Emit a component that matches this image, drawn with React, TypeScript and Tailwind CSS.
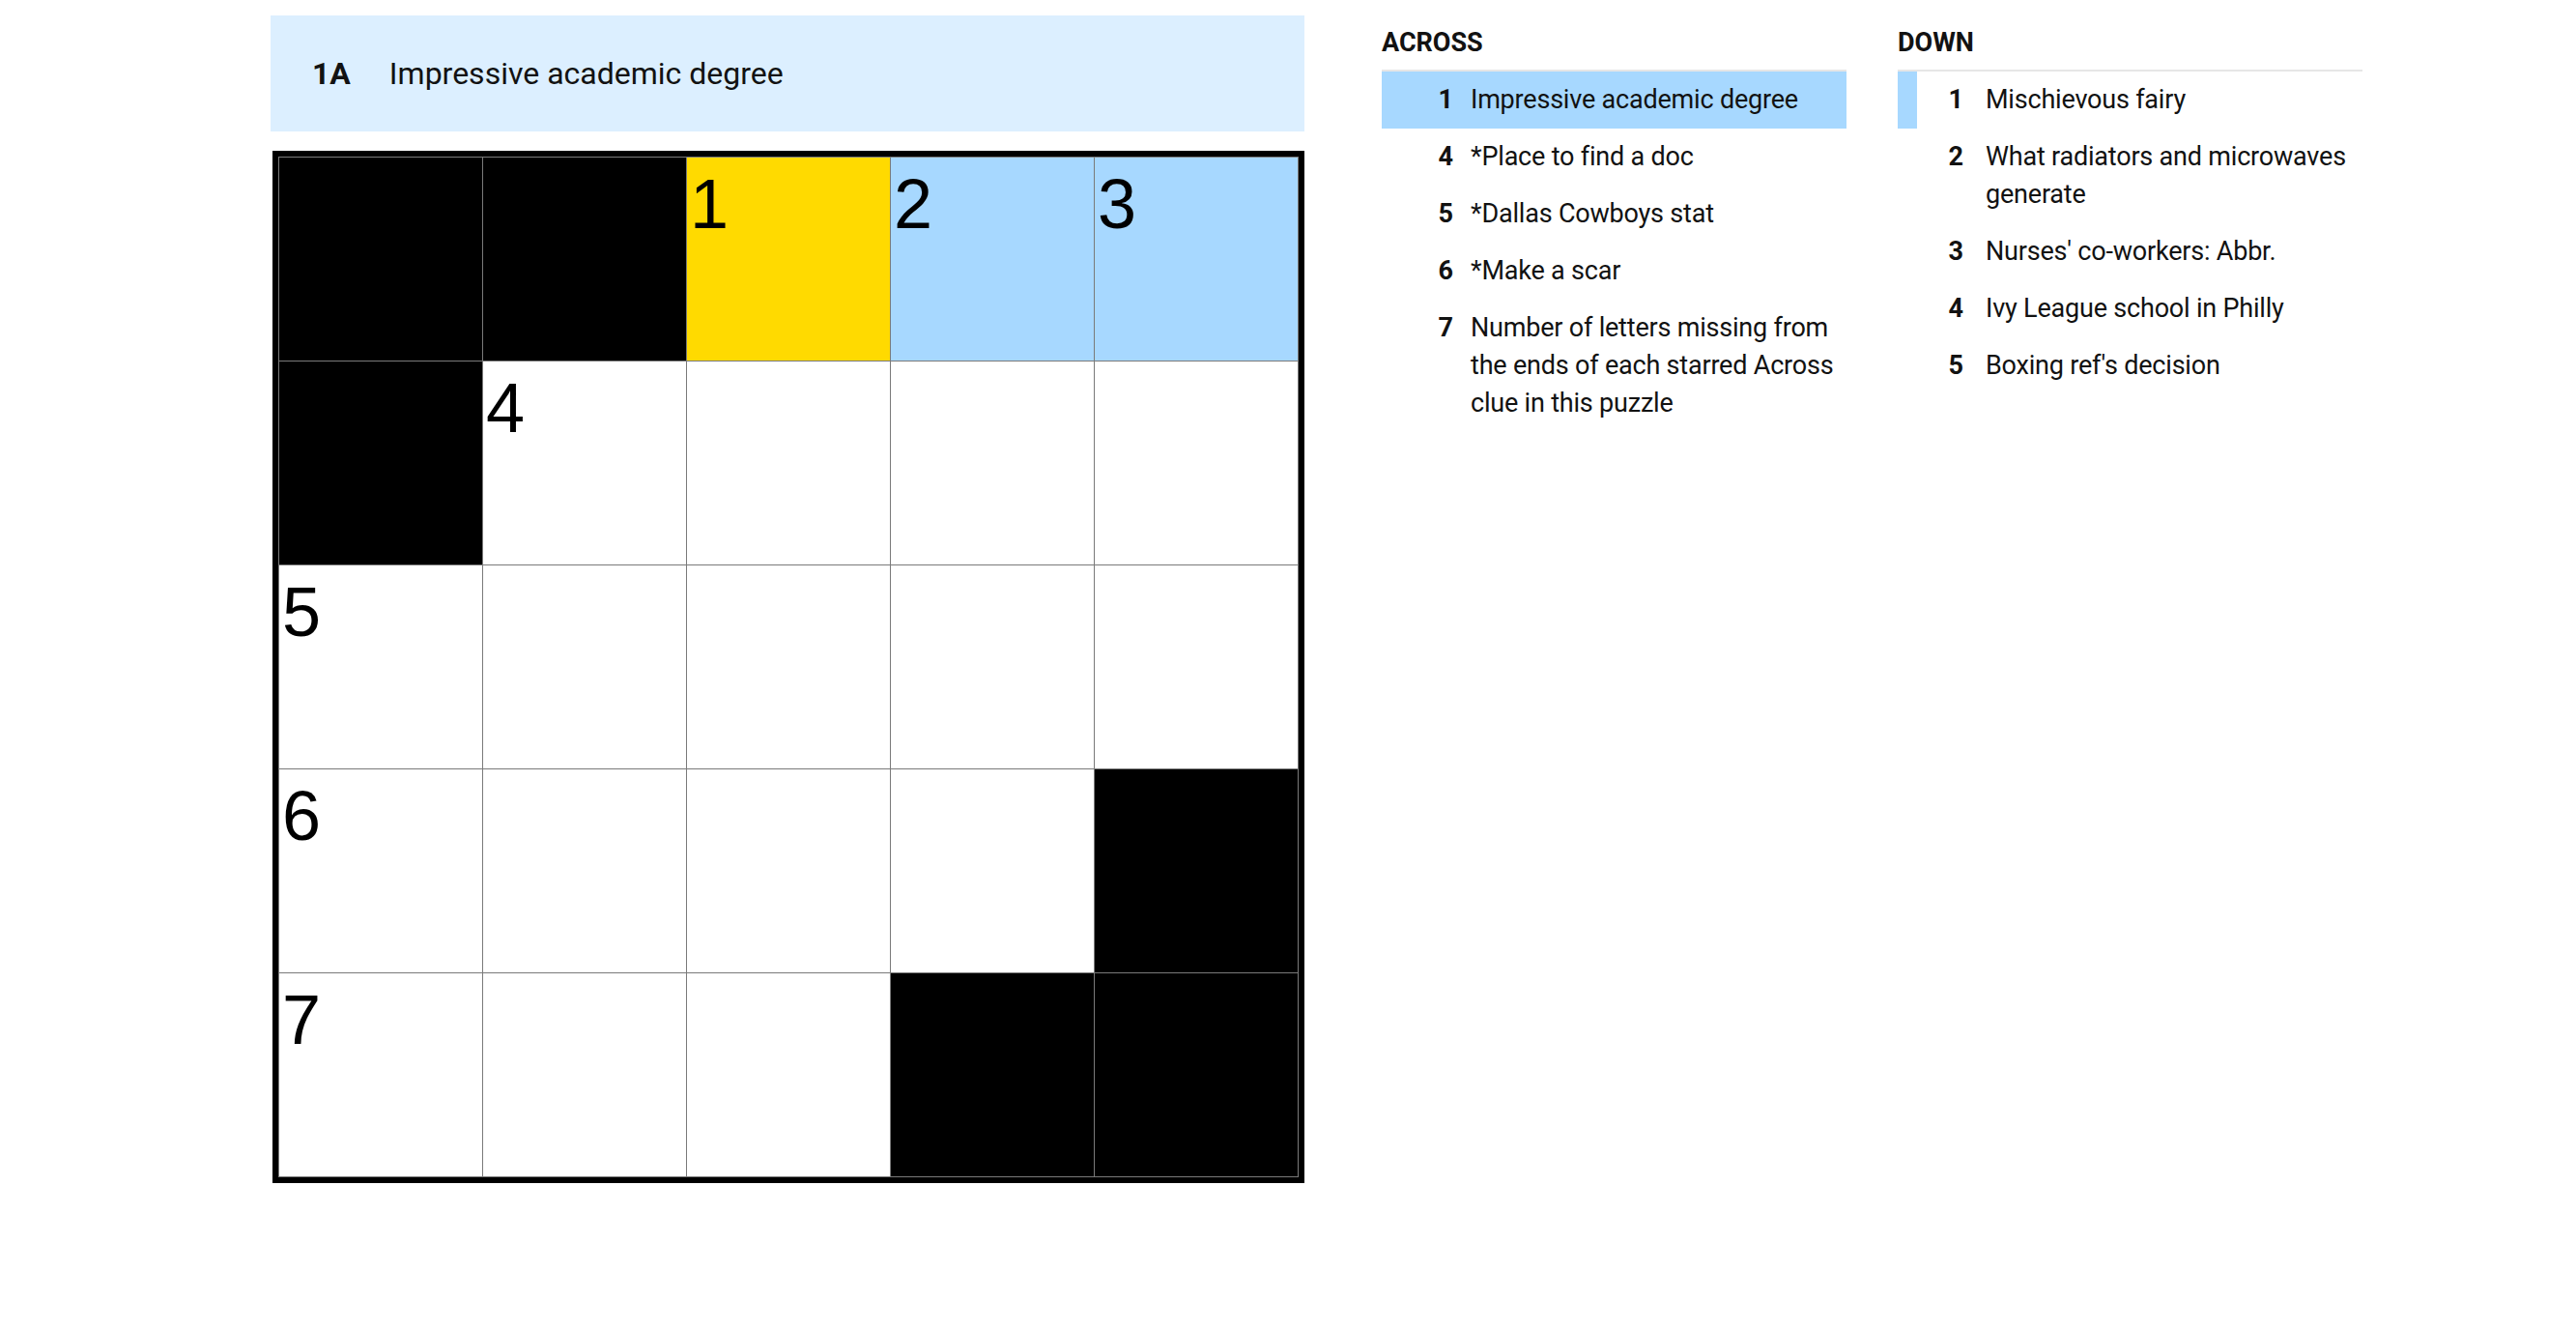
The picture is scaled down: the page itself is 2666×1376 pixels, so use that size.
import React from 'react'

type Cell = { black?: boolean; num?: number; tone?: 'focus' | 'word' }

const grid: Cell[][] = [
  [{ black: true }, { black: true }, { num: 1, tone: 'focus' }, { num: 2, tone: 'word' }, { num: 3, tone: 'word' }],
  [{ black: true }, { num: 4 }, {}, {}, {}],
  [{ num: 5 }, {}, {}, {}, {}],
  [{ num: 6 }, {}, {}, {}, { black: true }],
  [{ num: 7 }, {}, {}, { black: true }, { black: true }],
]

const across = [
  { n: 1, text: 'Impressive academic degree' },
  { n: 4, text: '*Place to find a doc' },
  { n: 5, text: '*Dallas Cowboys stat' },
  { n: 6, text: '*Make a scar' },
  { n: 7, text: 'Number of letters missing from the ends of each starred Across clue in this puzzle' },
]

const down = [
  { n: 1, text: 'Mischievous fairy' },
  { n: 2, text: 'What radiators and microwaves generate' },
  { n: 3, text: "Nurses' co-workers: Abbr." },
  { n: 4, text: 'Ivy League school in Philly' },
  { n: 5, text: "Boxing ref's decision" },
]

const franklin = { fontFamily: 'Roboto, "Liberation Sans", sans-serif' }

function ClueList({ title, clues, mode }: { title: string; clues: { n: number; text: string }[]; mode: 'full' | 'bar' }) {
  return (
    <section className="flex flex-col w-[481px] shrink-0">
      <h3 className="text-[27px] font-bold uppercase leading-none text-[#121212] pt-[15px] pb-[14px] border-b-2 border-[#e6e6e6]">{title}</h3>
      <ol className="flex flex-col">
        {clues.map((c, i) => {
          const active = i === 0
          return (
            <li
              key={c.n}
              className={`flex items-start border-l-[20px] py-[10px] ${
                active ? (mode === 'full' ? 'bg-[#a7d8ff] border-[#a7d8ff]' : 'border-[#a7d8ff]') : 'border-transparent'
              }`}
            >
              <span className={`font-bold text-[27px] leading-[39px] text-[#121212] text-right shrink-0 ${mode === 'full' ? 'w-[54px]' : 'w-[48px]'}`}>{c.n}</span>
              <span className={`text-[27px] leading-[39px] tracking-[-0.2px] text-[#121212] ${mode === 'full' ? 'pl-[18px]' : 'pl-[23px]'}`}>{c.text}</span>
            </li>
          )
        })}
      </ol>
    </section>
  )
}

export default function App() {
  return (
    <div className="w-[2666px] h-[1376px] bg-white flex items-start pl-[280px] pt-[16px]" style={franklin}>
      <div className="flex flex-col gap-[20px] w-[1070px] shrink-0">
        {/* Current clue bar */}
        <div className="h-[120px] bg-[#dcefff] flex items-center pl-[43px] gap-[40px] text-[32px] text-[#121212]">
          <span className="font-bold">1A</span>
          <span>Impressive academic degree</span>
        </div>

        {/* Board */}
        <div className="ml-[2px] w-[1068px] h-[1068px] border-[6px] border-black bg-[#7a7a7a] p-px grid grid-cols-5 gap-px">
          {grid.flat().map((cell, i) => (
            <div
              key={i}
              className={`pl-[3px] pt-[12px] ${
                cell.black ? 'bg-black' : cell.tone === 'focus' ? 'bg-[#ffda00]' : cell.tone === 'word' ? 'bg-[#a7d8ff]' : 'bg-white'
              }`}
            >
              {cell.num && (
                <span className="block text-[72px] leading-none text-black" style={{ fontFamily: '"Liberation Sans", Arial, sans-serif' }}>
                  {cell.num}
                </span>
              )}
            </div>
          ))}
        </div>
      </div>

      <div className="flex ml-[80px] gap-[53px] shrink-0">
        <ClueList title="Across" clues={across} mode="full" />
        <ClueList title="Down" clues={down} mode="bar" />
      </div>
    </div>
  )
}
